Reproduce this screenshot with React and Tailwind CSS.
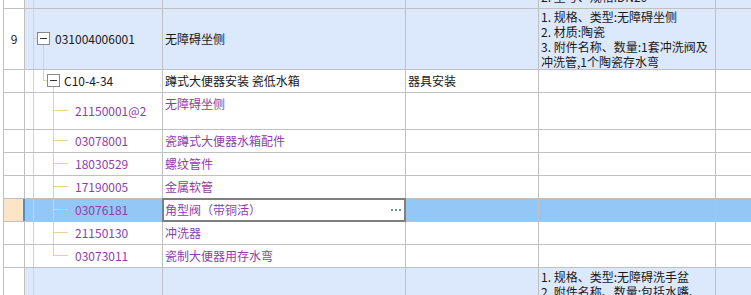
import React from 'react';

const FONT = { fontFamily: '"Noto Sans CJK SC", "Liberation Sans", sans-serif' };

// tree connector pieces, drawn inside the code cell
function VLine({ left, top = 0, height }) {
    return (
        <div
            className="absolute w-px bg-[#efcf98]"
            style={{ left, top, height: height ?? undefined, bottom: height == null ? 0 : undefined }}
        />
    );
}

function HLine({ left, top, width }) {
    return <div className="absolute h-px bg-[#efcf98]" style={{ left, top, width }} />;
}

function MinusBox({ left, top }) {
    return (
        <div
            className="absolute w-[13px] h-[13px] border border-[#8a8a8a] bg-white flex items-center justify-center"
            style={{ left, top }}
        >
            <div className="w-[7px] h-px bg-[#333]" />
        </div>
    );
}

function Row({ h, tone = 'white', num, tree, code, codeClass = 'text-[#1a1a1a]', codePad = 'pl-[50px]', name, nameClass = 'text-[#1a1a1a]', nameTop = false, type, desc, descPad = 'pt-0', editing = false }) {
    const bg = tone === 'blue' ? 'bg-[#dce8fb]' : tone === 'sel' ? 'bg-[#93c7f5]' : 'bg-white';
    return (
        <div className={`flex border-b border-[#c0c0c0] ${bg}`} style={{ height: h }}>
            {tone === 'sel' ? (
                <div className="w-[21px] shrink-0 bg-[#fde4c6] border-r-2 border-[#4a8fe0]" />
            ) : (
                <div className="w-[21px] shrink-0 bg-white border-r border-[#c0c0c0] flex items-center justify-center text-[12px] text-[#1a1a1a]">
                    {num}
                </div>
            )}
            <div className={`relative w-[138px] shrink-0 border-r border-[#c0c0c0] flex items-center text-[12px] ${codePad} ${codeClass}`}>
                {tree}
                <span className="relative">{code}</span>
            </div>
            <div className={`relative w-[243px] shrink-0 border-r border-[#c0c0c0] flex pl-[2px] text-[12px] whitespace-nowrap ${nameTop ? 'items-start leading-[21px]' : 'items-center'} ${nameClass} ${editing ? 'bg-white' : ''}`}>
                {name}
                {editing && (
                    <>
                        <div className="absolute -left-px -top-px -right-px -bottom-px border-2 border-[#7f7f7f]" />
                        <div className="absolute right-[4px] top-0 bottom-0 flex items-center gap-[2px]">
                            <span className="w-[2px] h-[2px] bg-[#6a8cae]" />
                            <span className="w-[2px] h-[2px] bg-[#6a8cae]" />
                            <span className="w-[2px] h-[2px] bg-[#6a8cae]" />
                        </div>
                    </>
                )}
            </div>
            <div className="w-[133px] shrink-0 border-r border-[#c0c0c0] flex items-center pl-[2px] text-[12px] text-[#1a1a1a]">
                {type}
            </div>
            <div className={`w-[177px] shrink-0 border-r border-[#c0c0c0] flex flex-col pl-[2px] text-[12px] leading-[15px] text-[#1a1a1a] overflow-hidden whitespace-nowrap ${descPad}`}>
                {desc && desc.map((line, i) => <div key={i}>{line}</div>)}
            </div>
            <div className="flex-1" />
        </div>
    );
}

const childCodes = [
    { code: '21150001@2', name: '无障碍坐侧', h: 37 },
    { code: '03078001', name: '瓷蹲式大便器水箱配件', h: 23 },
    { code: '18030529', name: '螺纹管件', h: 23 },
    { code: '17190005', name: '金属软管', h: 23 },
    { code: '03076181', name: '角型阀（带铜活）', h: 23, sel: true },
    { code: '21150130', name: '冲洗器', h: 23 },
    { code: '03073011', name: '瓷制大便器用存水弯', h: 23, last: true },
];

export default function App() {
    const purple = 'text-[#8f3ea7]';
    return (
        <div className="w-[751px] h-[295px] overflow-hidden bg-white" style={FONT}>
            <div className="ml-[3px] border-l border-[#c0c0c0] h-[295px] overflow-hidden">
                {/* previous item, cut off at the top */}
                <div className="flex border-b border-[#c0c0c0] bg-[#dce8fb] h-[9px]">
                    <div className="w-[21px] shrink-0 bg-white border-r border-[#c0c0c0]" />
                    <div className="relative w-[138px] shrink-0 border-r border-[#c0c0c0]">
                        <VLine left={8} />
                    </div>
                    <div className="w-[243px] shrink-0 border-r border-[#c0c0c0]" />
                    <div className="w-[133px] shrink-0 border-r border-[#c0c0c0]" />
                    <div className="w-[177px] shrink-0 border-r border-[#c0c0c0] flex flex-col justify-end pl-[2px] text-[12px] leading-[15px] text-[#1a1a1a] overflow-hidden whitespace-nowrap">
                        <div className="shrink-0 mb-[4px]">2. 型号、规格:DN20</div>
                    </div>
                    <div className="flex-1" />
                </div>

                <Row
                    h={61}
                    tone="blue"
                    num="9"
                    codePad="pl-[30px]"
                    tree={<>
                        <VLine left={8} />
                        <HLine left={8} top={29} width={5} />
                        <MinusBox left={12} top={23} />
                        <VLine left={18} top={36} />
                    </>}
                    code="031004006001"
                    name="无障碍坐侧"
                    desc={['1. 规格、类型:无障碍坐侧', '2. 材质:陶瓷', '3. 附件名称、数量:1套冲洗阀及', '冲洗管,1个陶瓷存水弯']}
                />

                <Row
                    h={23}
                    codePad="pl-[39px]"
                    tree={<>
                        <VLine left={8} />
                        <VLine left={18} top={0} height={11} />
                        <HLine left={18} top={10} width={5} />
                        <MinusBox left={22} top={4} />
                        <VLine left={28} top={17} />
                    </>}
                    code="C10-4-34"
                    name="蹲式大便器安装 瓷低水箱"
                    type="器具安装"
                />

                {childCodes.map((c) => {
                    const mid = Math.floor((c.h - 1) / 2) - 1;
                    return (
                        <Row
                            key={c.code}
                            h={c.h}
                            tone={c.sel ? 'sel' : 'white'}
                            codeClass={purple}
                            nameClass={purple}
                            nameTop={c.h > 23}
                            editing={c.sel}
                            tree={<>
                                <VLine left={8} />
                                {c.last ? <VLine left={28} top={0} height={mid + 1} /> : <VLine left={28} />}
                                <HLine left={28} top={mid} width={15} />
                            </>}
                            code={c.code}
                            name={c.name}
                        />
                    );
                })}

                <Row
                    h={60}
                    tone="blue"
                    codePad="pl-[30px]"
                    tree={<VLine left={8} />}
                    descPad="pt-[1px]"
                    desc={['1. 规格、类型:无障碍洗手盆', '2. 附件名称、数量:包括水嘴、']}
                />
            </div>
        </div>
    );
}
